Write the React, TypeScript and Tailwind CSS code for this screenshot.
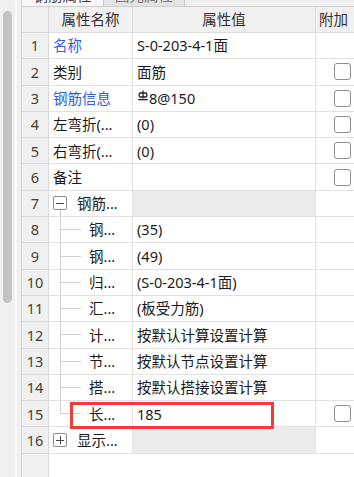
import React from "react";

type Row = {
  n: number;
  name: string;
  value?: React.ReactNode;
  blue?: boolean;
  check?: boolean;
  kind?: "plain" | "minus" | "plus" | "child" | "last";
  mark?: boolean;
};

function RebarMark() {
  return (
    <svg width="10" height="11" viewBox="0 0 10 11" className="mr-[1px] -mt-[5px]">
      <path d="M5 0.5V8.2" stroke="#222" strokeWidth="1.3" />
      <rect x="1.2" y="3" width="7.6" height="4" rx="1.2" fill="none" stroke="#222" strokeWidth="1.3" />
      <path d="M0.3 9.6H9.7" stroke="#222" strokeWidth="1.4" />
    </svg>
  );
}

const rows: Row[] = [
  { n: 1, name: "名称", blue: true, value: "S-0-203-4-1面" },
  { n: 2, name: "类别", value: "面筋", check: true },
  {
    n: 3,
    name: "钢筋信息",
    blue: true,
    value: (
      <span className="flex items-center pl-[1px]">
        <RebarMark />
        8@150
      </span>
    ),
    check: true,
  },
  { n: 4, name: "左弯折(...", value: "(0)", check: true },
  { n: 5, name: "右弯折(...", value: "(0)", check: true },
  { n: 6, name: "备注", value: "", check: true },
  { n: 7, name: "钢筋...", kind: "minus" },
  { n: 8, name: "钢...", value: "(35)", kind: "child" },
  { n: 9, name: "钢...", value: "(49)", kind: "child" },
  { n: 10, name: "归...", value: "(S-0-203-4-1面)", kind: "child" },
  { n: 11, name: "汇...", value: "(板受力筋)", kind: "child" },
  { n: 12, name: "计...", value: "按默认计算设置计算", kind: "child" },
  { n: 13, name: "节...", value: "按默认节点设置计算", kind: "child" },
  { n: 14, name: "搭...", value: "按默认搭接设置计算", kind: "child" },
  { n: 15, name: "长...", value: "185", kind: "last", check: true, mark: true },
  { n: 16, name: "显示...", kind: "plus" },
];

function ToggleBox({ open }: { open: boolean }) {
  return (
    <div className="w-[14px] h-[14px] border border-[#8d8d8d] rounded-[2px] bg-white flex items-center justify-center relative">
      <div className="w-[8px] h-[1px] bg-[#444]" />
      {!open && <div className="absolute w-[1px] h-[8px] bg-[#444]" />}
    </div>
  );
}

function NameCell({ row }: { row: Row }) {
  const kind = row.kind ?? "plain";
  if (kind === "minus" || kind === "plus") {
    return (
      <div className="flex h-full items-stretch pl-[4px]">
        <div className="w-[14px] flex flex-col">
          <div className="flex-1" />
          <ToggleBox open={kind === "minus"} />
          <div className="flex-1">
            {kind === "minus" && <div className="ml-[7px] h-full border-l border-[#d2d2d2]" />}
          </div>
        </div>
        <span className="ml-[10px] self-center">{row.name}</span>
      </div>
    );
  }
  if (kind === "child" || kind === "last") {
    return (
      <div className="flex h-full items-stretch pl-[4px]">
        <div className="w-[28px] flex flex-col">
          <div className="ml-[7px] flex-1 border-l border-b border-[#d2d2d2]" />
          <div className={"ml-[7px] flex-1 " + (kind === "child" ? "border-l border-[#d2d2d2]" : "")} />
        </div>
        <span className="ml-[8px] self-center">{row.name}</span>
      </div>
    );
  }
  return (
    <div className={"flex h-full items-center pl-[4px] " + (row.blue ? "text-[#2d5fe8]" : "")}>
      {row.name}
    </div>
  );
}

export default function App() {
  const group = (r: Row) => r.kind === "minus" || r.kind === "plus";
  return (
    <div
      className="w-[354px] h-[477px] overflow-hidden flex bg-white text-[#1b1b1b] text-[14.5px] leading-none"
      style={{ fontFamily: '"Noto Sans", "Noto Sans CJK SC", sans-serif' }}
    >
      {/* left scrollbar strip */}
      <div className="w-[22px] shrink-0 flex bg-[#f0f0f0] border-r border-[#d6d6d6]">
        <div className="w-[15px] pt-[11px] px-[3px]">
          <div className="h-[292px] rounded-full bg-[#c3c3c3]" />
        </div>
        <div className="w-[2px] bg-[#fbfbfb]" />
      </div>

      <div className="flex-1 flex flex-col min-w-0">
        {/* tabs, clipped at top */}
        <div className="h-[7px] shrink-0 flex bg-[#f0f0f0] border-b border-[#cfcfcf] overflow-hidden">
          <div className="w-[82px] bg-[#f8f8f8] border-r border-[#c9c9c9] flex justify-center">
            <span className="-mt-[12px] text-[#444]">钢筋属性</span>
          </div>
          <div className="w-[81px] bg-[#e4e4e4] border-r border-[#c9c9c9] flex justify-center">
            <span className="-mt-[12px] text-[#777]">图元属性</span>
          </div>
        </div>

        <div className="flex-1 flex flex-col overflow-hidden">
          <div className="grid grid-cols-[27px_84px_183px_70px] w-[364px]">
            {/* header */}
            <div className="h-[26px] bg-[#f0f0f0] border-r border-b border-[#d9d9d9]" />
            <div className="h-[26px] bg-[#f0f0f0] border-r border-b border-[#dcdcdc] flex items-center justify-center text-[#333]">
              属性名称
            </div>
            <div className="h-[26px] bg-[#f0f0f0] border-r border-b border-[#dcdcdc] flex items-center justify-center text-[#333]">
              属性值
            </div>
            <div className="h-[26px] bg-[#f0f0f0] border-b border-[#dcdcdc] flex items-center pl-[3px] text-[#333]">
              附加
            </div>

            {rows.map((r) => (
              <React.Fragment key={r.n}>
                <div className="h-[26.3px] bg-[#f0f0f0] border-r border-b border-[#dadada] flex items-center justify-center text-[#4a4030]">
                  {r.n}
                </div>
                <div className="h-[26.3px] bg-white border-r border-b border-[#e2e2e2] relative">
                  <NameCell row={r} />
                  {r.mark && (
                    <div className="absolute z-10 left-[21px] top-[1px] w-[204px] h-[27px] border-[3px] border-[#f23b3b]" />
                  )}
                </div>
                <div
                  className={
                    "h-[26.3px] border-r border-b border-[#e2e2e2] flex items-center pl-[4px] " +
                    (group(r) ? "bg-[#ebebeb]" : "bg-white")
                  }
                >
                  {r.value}
                </div>
                <div className="h-[26.3px] bg-white border-b border-[#e2e2e2] flex items-center pl-[18px]">
                  {r.check && <div className="w-[17px] h-[17px] rounded-[3px] border border-[#8f8f8f] bg-white" />}
                </div>
              </React.Fragment>
            ))}
          </div>
          <div className="flex-1 flex">
            <div className="w-[27px] bg-[#f0f0f0] border-r border-[#dadada]" />
            <div className="flex-1 bg-white" />
          </div>
        </div>
      </div>
    </div>
  );
}
